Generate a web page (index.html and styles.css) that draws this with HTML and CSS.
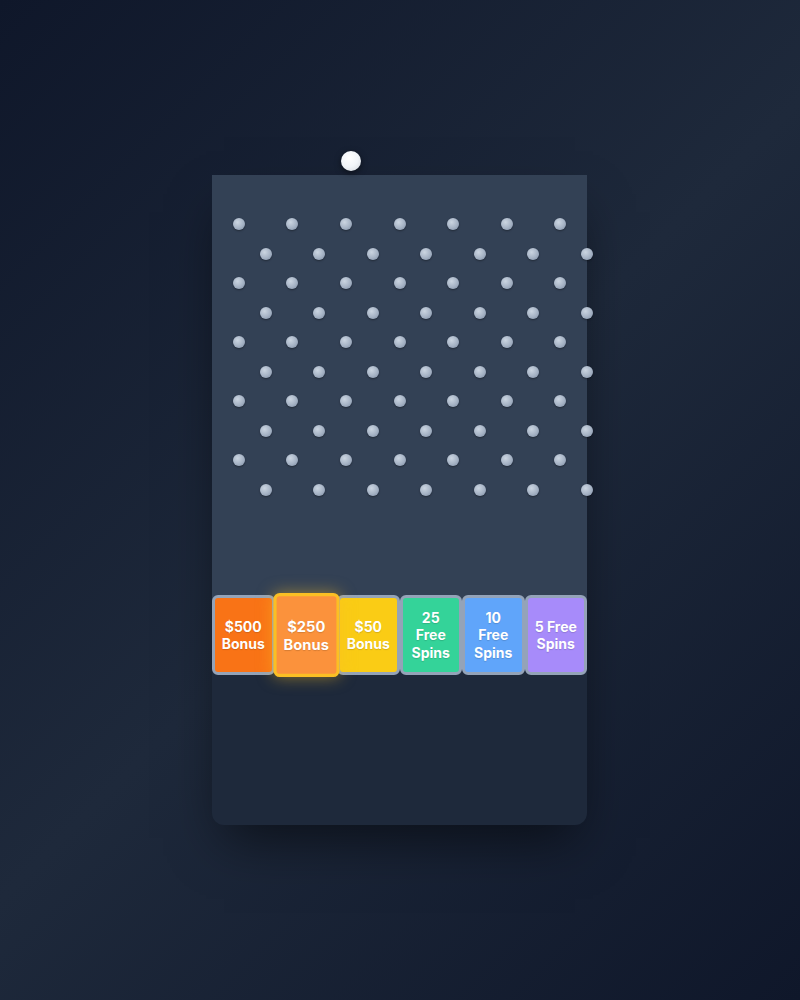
FILE: index.html
```html
<!DOCTYPE html>
<html lang="en">
<head>
<meta charset="utf-8">
<title>Plinko Bonus</title>
<link rel="stylesheet" href="styles.css">
</head>
<body>
<main class="game">
  <div class="board">
    <div class="ball"></div>
    <div class="row r0"><span class="peg c0"></span><span class="peg c1"></span><span class="peg c2"></span><span class="peg c3"></span><span class="peg c4"></span><span class="peg c5"></span><span class="peg c6"></span></div>
    <div class="row r1 odd"><span class="peg c0"></span><span class="peg c1"></span><span class="peg c2"></span><span class="peg c3"></span><span class="peg c4"></span><span class="peg c5"></span><span class="peg c6"></span></div>
    <div class="row r2"><span class="peg c0"></span><span class="peg c1"></span><span class="peg c2"></span><span class="peg c3"></span><span class="peg c4"></span><span class="peg c5"></span><span class="peg c6"></span></div>
    <div class="row r3 odd"><span class="peg c0"></span><span class="peg c1"></span><span class="peg c2"></span><span class="peg c3"></span><span class="peg c4"></span><span class="peg c5"></span><span class="peg c6"></span></div>
    <div class="row r4"><span class="peg c0"></span><span class="peg c1"></span><span class="peg c2"></span><span class="peg c3"></span><span class="peg c4"></span><span class="peg c5"></span><span class="peg c6"></span></div>
    <div class="row r5 odd"><span class="peg c0"></span><span class="peg c1"></span><span class="peg c2"></span><span class="peg c3"></span><span class="peg c4"></span><span class="peg c5"></span><span class="peg c6"></span></div>
    <div class="row r6"><span class="peg c0"></span><span class="peg c1"></span><span class="peg c2"></span><span class="peg c3"></span><span class="peg c4"></span><span class="peg c5"></span><span class="peg c6"></span></div>
    <div class="row r7 odd"><span class="peg c0"></span><span class="peg c1"></span><span class="peg c2"></span><span class="peg c3"></span><span class="peg c4"></span><span class="peg c5"></span><span class="peg c6"></span></div>
    <div class="row r8"><span class="peg c0"></span><span class="peg c1"></span><span class="peg c2"></span><span class="peg c3"></span><span class="peg c4"></span><span class="peg c5"></span><span class="peg c6"></span></div>
    <div class="row r9 odd"><span class="peg c0"></span><span class="peg c1"></span><span class="peg c2"></span><span class="peg c3"></span><span class="peg c4"></span><span class="peg c5"></span><span class="peg c6"></span></div>
  </div>
  <div class="slots">
    <div class="slot s-500">$500 Bonus</div>
    <div class="slot s-250 active">$250 Bonus</div>
    <div class="slot s-50">$50 Bonus</div>
    <div class="slot s-25">25 Free Spins</div>
    <div class="slot s-10">10 Free Spins</div>
    <div class="slot s-5">5 Free Spins</div>
  </div>
  <div class="footer"></div>
</main>
</body>
</html>
```

FILE: styles.css
```css
* { box-sizing: border-box; }

html, body {
  margin: 0;
  padding: 0;
}

body {
  width: 800px;
  height: 1000px;
  display: flex;
  align-items: center;
  justify-content: center;
  background: linear-gradient(135deg, #0f172a 0%, #1e293b 50%, #0f172a 100%);
  font-family: Inter, "Liberation Sans", sans-serif;
}

.game {
  width: 375px;
  height: 650px;
  margin-right: 1px;
  display: flex;
  flex-direction: column;
  background: #1e293b;
  border-radius: 0 0 12px 12px;
  box-shadow: 0 25px 50px -12px rgba(0, 0, 0, 0.55);
}

.board {
  position: relative;
  height: 420px;
  background: #334155;
}

.ball {
  position: absolute;
  top: -24px;
  left: 129px;
  width: 20px;
  height: 20px;
  border-radius: 50%;
  background: radial-gradient(circle at 40% 35%, #ffffff 0%, #f1f5f9 50%, #d1d5db 100%);
  box-shadow: 0 2px 6px rgba(0, 0, 0, 0.5);
}

.row {
  position: absolute;
  left: 0;
  width: 100%;
  height: 12px;
}
.row.odd { left: 7.142857%; }
.r0 { top: 43px; }
.r1 { top: 72.5px; }
.r2 { top: 102px; }
.r3 { top: 131.5px; }
.r4 { top: 161px; }
.r5 { top: 190.5px; }
.r6 { top: 220px; }
.r7 { top: 249.5px; }
.r8 { top: 279px; }
.r9 { top: 308.5px; }

.peg {
  position: absolute;
  top: 0;
  width: 12px;
  height: 12px;
  margin-left: -6px;
  border-radius: 50%;
  background: radial-gradient(circle at 38% 35%, #cbd5e1 0%, #a5b2c4 55%, #7d8ca2 100%);
  box-shadow: 0 1px 2px rgba(0, 0, 0, 0.35);
}
.c0 { left: 7.142857%; }
.c1 { left: 21.428571%; }
.c2 { left: 35.714286%; }
.c3 { left: 50%; }
.c4 { left: 64.285714%; }
.c5 { left: 78.571429%; }
.c6 { left: 92.857143%; }

.slots {
  height: 80px;
  display: grid;
  grid-template-columns: repeat(6, 1fr);
  background: linear-gradient(#334155 50%, #1e293b 50%);
}

.slot {
  display: flex;
  align-items: center;
  justify-content: center;
  text-align: center;
  padding: 0 4px;
  border: 3px solid #94a3b8;
  border-radius: 6px;
  color: #ffffff;
  font-weight: 700;
  font-size: 14px;
  line-height: 17.5px;
  text-shadow: 0 1px 1px rgba(0, 0, 0, 0.15);
}

.s-500 { background: #f97316; }
.s-250 { background: #fb923c; }
.s-50 { background: #facc15; }
.s-25 { background: #34d399; }
.s-10 { background: #60a5fa; }
.s-5 { background: #a78bfa; }

.slot.active {
  position: relative;
  z-index: 1;
  transform: scale(1.05);
  border-color: #fbbf24;
  box-shadow: 0 0 15px rgba(251, 191, 36, 0.5);
}

.footer {
  flex: 1;
}
```
